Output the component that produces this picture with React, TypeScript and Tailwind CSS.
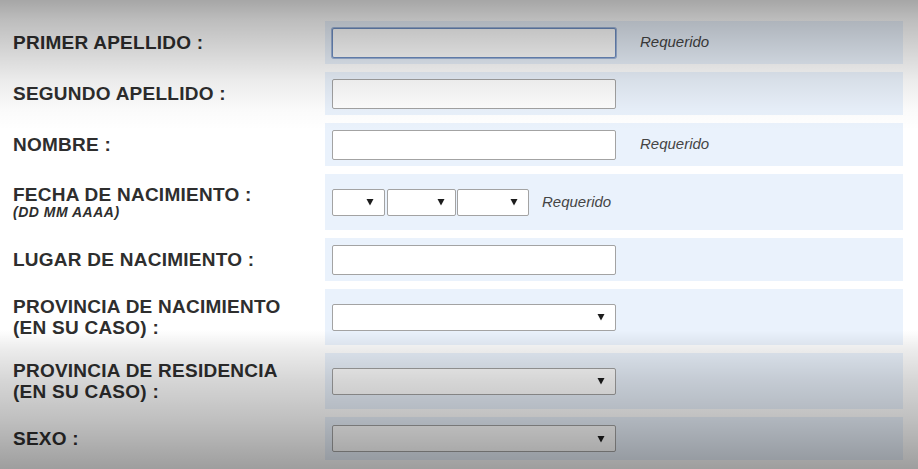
import React from "react";

const Tri = () => (
  <svg width="8" height="8" viewBox="0 0 8 8" className="shrink-0">
    <polygon points="0.5,1 7.5,1 4,7.5" fill="#1c1c1c" />
  </svg>
);

const Select = ({ w }: { w: string }) => (
  <div className={`${w} h-[27px] bg-white border border-[#a3a3a3] rounded-[2px] flex items-center justify-end pr-[10px]`}>
    <Tri />
  </div>
);

const Req = ({ ml }: { ml: string }) => (
  <span className={`${ml} italic text-[15px] text-[#454545]`} style={{ fontFamily: '"Liberation Sans", Arial, sans-serif' }}>
    Requerido
  </span>
);

const Row = ({ tall, label, children }: { tall?: boolean; label: React.ReactNode; children?: React.ReactNode }) => (
  <div className={`flex ${tall ? "h-[56px]" : "h-[43px]"}`}>
    <div className="w-[325px] pl-[13px] flex flex-col justify-center text-[#2e2e2e] font-bold text-[19px] leading-[21px] tracking-[0.25px]">
      {label}
    </div>
    <div className="w-[578px] bg-[#eaf2fc] pl-[7px] flex items-center">{children}</div>
  </div>
);

const Input = ({ focus }: { focus?: boolean }) => (
  <div
    className={`w-[284px] h-[30px] bg-white rounded-[2px] ${
      focus ? "border border-[#6f8fc4] shadow-[0_0_0_1px_rgba(111,143,196,0.6)]" : "border border-[#a3a3a3]"
    }`}
  />
);

export default function App() {
  return (
    <div
      className="relative w-[918px] h-[469px] bg-white overflow-hidden"
      style={{ fontFamily: '"Liberation Sans", Arial, sans-serif' }}
    >
      <div className="flex flex-col gap-[8px] pt-[21px]">
        <Row label="PRIMER APELLIDO :">
          <Input focus />
          <Req ml="ml-[24px]" />
        </Row>
        <Row label="SEGUNDO APELLIDO :">
          <Input />
        </Row>
        <Row label="NOMBRE :">
          <Input />
          <Req ml="ml-[24px]" />
        </Row>
        <Row
          tall
          label={
            <>
              <span>FECHA DE NACIMIENTO :</span>
              <span className="italic text-[14px] leading-[15px] tracking-[0.5px]">(DD MM AAAA)</span>
            </>
          }
        >
          <div className="flex items-center gap-[1.5px]">
            <Select w="w-[53px]" />
            <Select w="w-[69px]" />
            <Select w="w-[72px]" />
          </div>
          <Req ml="ml-[13px]" />
        </Row>
        <Row label="LUGAR DE NACIMIENTO :">
          <Input />
        </Row>
        <Row
          tall
          label={
            <>
              <span>PROVINCIA DE NACIMIENTO</span>
              <span>(EN SU CASO) :</span>
            </>
          }
        >
          <Select w="w-[284px]" />
        </Row>
        <Row
          tall
          label={
            <>
              <span>PROVINCIA DE RESIDENCIA</span>
              <span>(EN SU CASO) :</span>
            </>
          }
        >
          <Select w="w-[284px]" />
        </Row>
        <Row label="SEXO :">
          <Select w="w-[284px]" />
        </Row>
      </div>
      <div className="pointer-events-none absolute inset-0 bg-[linear-gradient(to_bottom,rgba(0,0,0,0.35)_0px,rgba(0,0,0,0.26)_20px,rgba(0,0,0,0.17)_50px,rgba(0,0,0,0.08)_80px,rgba(0,0,0,0.02)_110px,rgba(0,0,0,0)_130px,rgba(0,0,0,0)_330px,rgba(0,0,0,0.07)_348px,rgba(0,0,0,0.16)_380px,rgba(0,0,0,0.25)_420px,rgba(0,0,0,0.38)_469px)]" />
    </div>
  );
}
